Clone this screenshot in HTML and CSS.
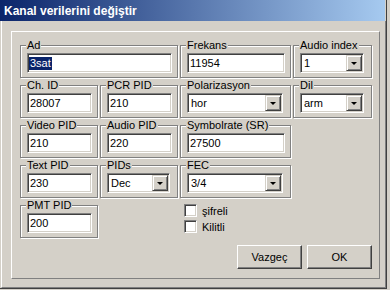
FILE: index.html
```html
<!DOCTYPE html>
<html lang="tr">
<head>
    <meta charset="UTF-8">
    <meta name="viewport" content="width=device-width, initial-scale=1.0">
    <title>Kanal verilerini değiştir</title>
    <link rel="stylesheet" href="styles.css">
</head>
<body>
    <div class="window">
        <div class="titlebar">Kanal verilerini değiştir</div>
        <div class="frame">
            <div class="panel">
                <div class="row">
                    <fieldset class="group col-ab">
                        <legend>Ad</legend>
                        <div class="field"><span class="selected">3sat</span></div>
                    </fieldset>
                    <fieldset class="group col-c">
                        <legend>Frekans</legend>
                        <div class="field">11954</div>
                    </fieldset>
                    <fieldset class="group col-d">
                        <legend>Audio index</legend>
                        <div class="combo"><span class="value">1</span><span class="drop"></span></div>
                    </fieldset>
                </div>

                <div class="row">
                    <fieldset class="group col-a">
                        <legend>Ch. ID</legend>
                        <div class="field">28007</div>
                    </fieldset>
                    <fieldset class="group col-b">
                        <legend>PCR PID</legend>
                        <div class="field">210</div>
                    </fieldset>
                    <fieldset class="group col-c">
                        <legend>Polarizasyon</legend>
                        <div class="combo"><span class="value">hor</span><span class="drop"></span></div>
                    </fieldset>
                    <fieldset class="group col-d">
                        <legend>Dil</legend>
                        <div class="combo"><span class="value">arm</span><span class="drop"></span></div>
                    </fieldset>
                </div>

                <div class="row">
                    <fieldset class="group col-a">
                        <legend>Video PID</legend>
                        <div class="field">210</div>
                    </fieldset>
                    <fieldset class="group col-b">
                        <legend>Audio PID</legend>
                        <div class="field">220</div>
                    </fieldset>
                    <fieldset class="group col-c">
                        <legend>Symbolrate (SR)</legend>
                        <div class="field">27500</div>
                    </fieldset>
                </div>

                <div class="row">
                    <fieldset class="group col-a">
                        <legend>Text PID</legend>
                        <div class="field">230</div>
                    </fieldset>
                    <fieldset class="group col-b">
                        <legend>PIDs</legend>
                        <div class="combo"><span class="value">Dec</span><span class="drop"></span></div>
                    </fieldset>
                    <fieldset class="group col-c">
                        <legend>FEC</legend>
                        <div class="combo"><span class="value">3/4</span><span class="drop"></span></div>
                    </fieldset>
                </div>

                <div class="row">
                    <fieldset class="group col-a">
                        <legend>PMT PID</legend>
                        <div class="field">200</div>
                    </fieldset>
                    <div class="spacer col-b"></div>
                    <div class="checks">
                        <label class="check"><span class="box"></span>şifreli</label>
                        <label class="check"><span class="box"></span>Kilitli</label>
                    </div>
                </div>

                <div class="buttons">
                    <button class="btn">Vazgeç</button>
                    <button class="btn">OK</button>
                </div>
            </div>
        </div>
    </div>
</body>
</html>
```

FILE: styles.css
```css
* {
    margin: 0;
    padding: 0;
    box-sizing: border-box;
}

body {
    font-family: 'Liberation Sans', Arial, sans-serif;
    font-size: 11px;
    color: #000;
    background-color: #d4d0c8;
}

.window {
    width: 387px;
    height: 289px;
    display: flex;
    flex-direction: column;
    border-right: 1px solid #404040;
    border-bottom: 1px solid #404040;
}

.titlebar {
    height: 21px;
    margin-right: 1px;
    padding: 2px 0 0 4px;
    line-height: 19px;
    font-size: 12px;
    font-weight: bold;
    color: #fff;
    background: linear-gradient(to right, #0a246a, #a6caf0);
}

.frame {
    flex: 1;
    margin-left: 1px;
    padding: 10px 0 0 9px;
    border-left: 1px solid #fff;
    border-right: 1px solid #808080;
    border-bottom: 1px solid #808080;
}

.panel {
    width: 369px;
    height: 248px;
    padding: 7px 7px 0 8px;
    border: 1px solid;
    border-color: #fff #808080 #808080 #fff;
}

.row {
    display: flex;
    gap: 2px;
    margin-bottom: 1px;
}

.group {
    border: 1px solid #808080;
    padding: 1px 5px 4px 6px;
    min-width: 0;
    box-shadow: inset 1px 1px 0 #fff, 1px 1px 0 #fff;
}

.group legend {
    line-height: 13px;
    padding: 0 1px;
    margin-left: -1px;
    background-color: #d4d0c8;
}

.col-a,
.col-b {
    width: 78px;
    flex: none;
}

.col-ab {
    width: 158px;
}

.col-c {
    width: 111px;
}

.col-d {
    width: 79px;
}

.field,
.combo {
    height: 20px;
    border: 1px solid;
    border-color: #808080 #fff #fff #808080;
    box-shadow: inset 1px 1px 0 #404040, inset -1px -1px 0 #d4d0c8;
    background-color: #fff;
    line-height: 18px;
    padding-left: 2px;
    white-space: nowrap;
}

.selected {
    display: inline-block;
    line-height: 13px;
    padding: 0 1px;
    margin-left: -1px;
    color: #fff;
    background-color: #0a246a;
}

.combo {
    display: flex;
    align-items: center;
    margin-right: 2px;
    padding: 1px 1px 1px 3px;
}

.combo .value {
    flex: 1;
}

.drop {
    width: 16px;
    height: 16px;
    display: flex;
    align-items: center;
    justify-content: center;
    background-color: #d4d0c8;
    border: 1px solid;
    border-color: #d4d0c8 #404040 #404040 #d4d0c8;
    box-shadow: inset 1px 1px 0 #fff, inset -1px -1px 0 #808080;
}

.drop::after {
    content: "";
    width: 0;
    height: 0;
    border-left: 3px solid transparent;
    border-right: 3px solid transparent;
    border-top: 3px solid #000;
    margin-top: 1px;
}

.checks {
    padding: 5px 0 0 4px;
    display: flex;
    flex-direction: column;
    gap: 3px;
}

.check {
    display: flex;
    align-items: center;
    gap: 5px;
    height: 13px;
}

.box {
    width: 13px;
    height: 13px;
    background-color: #fff;
    border: 1px solid;
    border-color: #808080 #fff #fff #808080;
    box-shadow: inset 1px 1px 0 #404040, inset -1px -1px 0 #d4d0c8;
}

.buttons {
    display: flex;
    justify-content: flex-end;
    gap: 5px;
    margin-top: 7px;
}

.btn {
    width: 65px;
    height: 24px;
    font-family: inherit;
    font-size: 11px;
    color: #000;
    background-color: #d4d0c8;
    border: 1px solid;
    border-color: #fff #404040 #404040 #fff;
    box-shadow: inset -1px -1px 0 #808080;
}
```
